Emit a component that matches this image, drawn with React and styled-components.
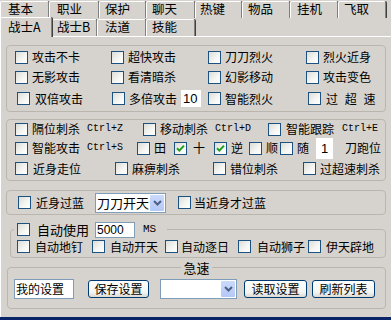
import styled, { createGlobalStyle } from 'styled-components';

const GlobalStyle = createGlobalStyle`
  body {
    margin: 0;
    background: #d6d3ce;
    font-family: "Noto Sans CJK SC", "Liberation Sans", sans-serif;
    font-size: 12px;
    color: #000;
  }
`;

const Window = styled.div`
  width: 391px;
  height: 320px;
  overflow: hidden;
  display: flex;
  flex-direction: column;
  background: #d6d3ce;
`;

const TabRow = styled.div`
  display: flex;
  align-items: flex-end;
  height: 18px;
  flex: none;
`;

const Tab = styled.div`
  position: relative;
  z-index: ${p => (p.$active ? 2 : 1)};
  width: ${p => p.$w}px;
  height: ${p => (p.$active ? 20 : 17)}px;
  margin-bottom: ${p => (p.$active ? -1 : 0)}px;
  box-sizing: border-box;
  padding-left: ${p => p.$pad}px;
  border-top: 1px solid #fff;
  border-left: 1px solid #fff;
  border-right: 1px solid #808080;
  box-shadow: 1px 0 0 #404040;
  border-radius: 2px 2px 0 0;
  background: #d6d3ce;
  font-size: 12.5px;
  line-height: ${p => (p.$active ? 18 : 14)}px;
  white-space: nowrap;
  flex: none;
`;

const Panel = styled.div`
  flex: 1;
  border-top: 1px solid #fff;
  border-left: 1px solid #fff;
  padding-left: 5px;
  display: flex;
  flex-direction: column;
`;

const Group = styled.div`
  box-sizing: border-box;
  width: ${p => p.$w || 380}px;
  height: ${p => p.$h}px;
  margin-top: ${p => p.$mt}px;
  margin-left: ${p => p.$ml || 0}px;
  padding: 0 0 0 ${p => p.$pl}px;
  border: 1px solid #b9b6ae;
  border-radius: 4px;
  display: flex;
  flex-direction: column;
`;

const Frame = styled.fieldset`
  box-sizing: border-box;
  width: ${p => p.$w}px;
  height: ${p => p.$h}px;
  margin: ${p => p.$mt}px 0 0 ${p => p.$ml}px;
  padding: 0;
  min-inline-size: 0;
  border: 1px solid #b9b6ae;
  border-radius: 4px;
`;

const Legend = styled.legend`
  height: 15px;
  padding: 0 ${p => p.$pr}px 0 ${p => p.$plg}px;
  margin: ${p => (p.$center ? '0 auto' : '0 0 0 3px')};
  font-size: 13px;
  line-height: 15px;
`;

const LegendRow = styled.div`
  display: flex;
  align-items: center;
  height: 15px;
`;

const Row = styled.div`
  display: flex;
  align-items: center;
  height: ${p => p.$h}px;
  padding-left: ${p => p.$pl || 0}px;
  padding-top: ${p => p.$pt || 0}px;
  flex: none;
`;

const Item = styled.label`
  display: flex;
  align-items: center;
  gap: ${p => p.$gap || 4}px;
  width: ${p => (p.$w ? `${p.$w}px` : 'auto')};
  white-space: nowrap;
  flex: none;
  line-height: 14px;
`;

const Box = styled.span`
  width: 13px;
  height: 13px;
  box-sizing: border-box;
  border: 1px solid #1c5180;
  background: linear-gradient(135deg, #dcdcd7 0%, #f6f6f4 60%, #ffffff 100%);
  display: inline-flex;
  align-items: center;
  justify-content: center;
  flex: none;
`;

const Key = styled.span`
  font-family: "Liberation Mono", monospace;
  font-size: 10px;
  margin-left: 3px;
`;

const Spaced = styled.span`
  word-spacing: 4px;
`;

const Field = styled.span`
  width: ${p => p.$w}px;
  height: ${p => p.$h}px;
  box-sizing: border-box;
  margin-left: ${p => p.$ml || 0}px;
  margin-right: ${p => p.$mr || 0}px;
  background: #fff;
  border: 1px solid ${p => (p.$flat ? '#fff' : '#7f9db9')};
  font-family: ${p => (p.$latin ? '"Liberation Sans", sans-serif' : 'inherit')};
  font-size: ${p => p.$fs || 12}px;
  line-height: ${p => p.$h - 2}px;
  text-align: ${p => (p.$center ? 'center' : 'left')};
  padding-left: ${p => (p.$center ? 0 : 1)}px;
  flex: none;
  overflow: hidden;
  white-space: nowrap;
`;

const Unit = styled.span`
  font-family: "Liberation Mono", monospace;
  font-size: 11px;
  margin-left: 8px;
`;

const Combo = styled.span`
  display: flex;
  align-items: stretch;
  width: ${p => p.$w}px;
  height: 20px;
  box-sizing: border-box;
  margin-right: ${p => p.$mr || 0}px;
  border: 1px solid #7f9db9;
  background: #fff;
  flex: none;
`;

const ComboText = styled.span`
  flex: 1;
  padding-left: 1px;
  font-size: 13px;
  line-height: 18px;
  white-space: nowrap;
  overflow: hidden;
`;

const DropBtn = styled.span`
  width: 16px;
  box-sizing: border-box;
  border: 1px solid #fff;
  border-radius: 2px;
  background: linear-gradient(#cbdafc, #b4c8f6);
  display: flex;
  align-items: center;
  justify-content: center;
`;

const Button = styled.button`
  width: ${p => p.$w}px;
  height: 18px;
  box-sizing: border-box;
  margin-right: ${p => p.$mr || 0}px;
  padding: 0;
  border: 1px solid #003c74;
  border-radius: 3px;
  background: linear-gradient(#ffffff, #f4f4f0 70%, #dcdad2);
  font-family: "Noto Sans CJK SC", sans-serif;
  font-size: 12px;
  line-height: 16px;
  color: #000;
  flex: none;
`;

const Strip = styled.div`
  height: 3px;
  background: #0a246a;
  flex: none;
`;

const Check = ({ on }) => (
  <Box>
    {on && (
      <svg width="9" height="9" viewBox="0 0 9 9">
        <path d="M1 4.2 L3.4 6.6 L8 1.6" fill="none" stroke="#21a121" strokeWidth="2" />
      </svg>
    )}
  </Box>
);

const Chevron = () => (
  <svg width="9" height="6" viewBox="0 0 9 6">
    <path d="M1 1 L4.5 4.5 L8 1" fill="none" stroke="#4d6185" strokeWidth="2" />
  </svg>
);

const CB = ({ w, gap, on, children }) => (
  <Item $w={w} $gap={gap}>
    <Check on={on} />
    {children}
  </Item>
);

const backTabs = [
  ['基本', 49, 7],
  ['职业', 50, 7],
  ['保护', 47, 5],
  ['聊天', 49, 5],
  ['热键', 47, 4],
  ['物品', 48, 5],
  ['挂机', 48, 6],
  ['飞取', 48, 5],
];

const frontTabs = [
  ['战士A', 52, 7, true],
  ['战士B', 45, 4],
  ['法道', 49, 7],
  ['技能', 49, 5],
];

const App = () => (
  <>
    <GlobalStyle />
    <Window>
      <TabRow>
        {backTabs.map(([t, w, pad]) => (
          <Tab key={t} $w={w} $pad={pad}>{t}</Tab>
        ))}
      </TabRow>
      <TabRow>
        {frontTabs.map(([t, w, pad, active]) => (
          <Tab key={t} $w={w} $pad={pad} $active={active}>{t}</Tab>
        ))}
      </TabRow>
      <Panel>
        <Group $h={67} $mt={8} $pl={8}>
          <Row $h={22}>
            <CB w={96}>攻击不卡</CB>
            <CB w={97}>超快攻击</CB>
            <CB w={98}>刀刀烈火</CB>
            <CB>烈火近身</CB>
          </Row>
          <Row $h={18}>
            <CB w={96}>无影攻击</CB>
            <CB w={97}>看清暗杀</CB>
            <CB w={98}>幻影移动</CB>
            <CB>攻击变色</CB>
          </Row>
          <Row $h={25} $pl={2}>
            <CB w={95} gap={5}>双倍攻击</CB>
            <Item $w={96}>
              <Check />
              多倍攻击
              <Field $w={20} $h={17} $flat $latin $fs={13}>10</Field>
            </Item>
            <CB w={100}>智能烈火</CB>
            <CB gap={5}><Spaced>过 超 速</Spaced></CB>
          </Row>
        </Group>

        <Group $h={62} $mt={7} $pl={8}>
          <Row $h={18}>
            <CB w={128}>隔位刺杀<Key>Ctrl+Z</Key></CB>
            <CB w={125}>移动刺杀<Key>Ctrl+D</Key></CB>
            <CB gap={5}>智能跟踪<Key>Ctrl+E</Key></CB>
          </Row>
          <Row $h={20}>
            <CB w={122}>智能攻击<Key>Ctrl+S</Key></CB>
            <CB w={37}>田</CB>
            <CB w={40} gap={6} on>十</CB>
            <CB w={35} on>逆</CB>
            <CB w={31}>顺</CB>
            <CB w={36}>随</CB>
            <Field $w={17} $h={21} $flat $latin $fs={13} $center $mr={12}>1</Field>
            <Item>刀跑位</Item>
          </Row>
          <Row $h={21}>
            <CB w={100} gap={5}>近身走位</CB>
            <CB w={98}>麻痹刺杀</CB>
            <CB w={90}>错位刺杀</CB>
            <CB>过超速刺杀</CB>
          </Row>
        </Group>

        <Group $h={25} $mt={9} $pl={11}>
          <Row $h={23}>
            <CB w={77} gap={5}>近身过蓝</CB>
            <Combo $w={71} $mr={12}>
              <ComboText>刀刀开天</ComboText>
              <DropBtn><Chevron /></DropBtn>
            </Combo>
            <CB gap={3}>当近身才过蓝</CB>
          </Row>
        </Group>

        <Frame $w={376} $h={36} $mt={7} $ml={4}>
          <Legend $plg={3} $pr={11}>
            <LegendRow>
              <CB gap={7}>自动使用</CB>
              <Field $w={40} $h={16} $latin $ml={6}>5000</Field>
              <Unit>MS</Unit>
            </LegendRow>
          </Legend>
          <Row $h={19} $pl={6}>
            <CB w={75} gap={5}>自动地钉</CB>
            <CB w={73} gap={5}>自动开天</CB>
            <CB w={73} gap={3}>自动逐日</CB>
            <CB w={70} gap={6}>自动狮子</CB>
            <CB gap={5}>伊天辟地</CB>
          </Row>
        </Frame>

        <Frame $w={379} $h={49} $mt={2} $ml={1}>
          <Legend $center $plg={2} $pr={2}>急速</Legend>
          <Row $h={22} $pt={3} $pl={6}>
            <Field $w={60} $h={20} $mr={14}>我的设置</Field>
            <Button $w={61} $mr={11}>保存设置</Button>
            <Combo $w={77} $mr={7}>
              <ComboText />
              <DropBtn><Chevron /></DropBtn>
            </Combo>
            <Button $w={63} $mr={5}>读取设置</Button>
            <Button $w={63}>刷新列表</Button>
          </Row>
        </Frame>
      </Panel>
      <Strip />
    </Window>
  </>
);

export default App;
